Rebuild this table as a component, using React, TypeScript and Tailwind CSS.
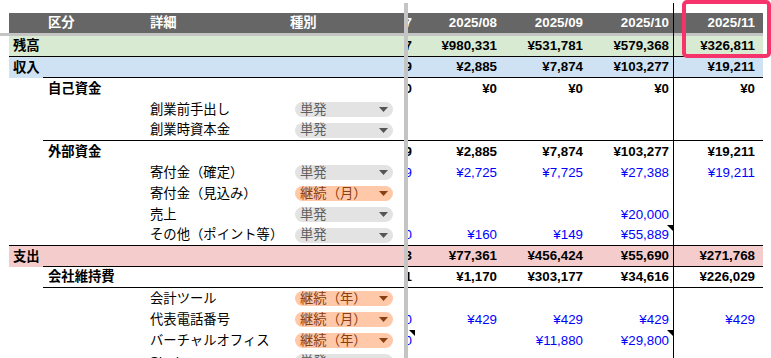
import React from "react";

type Chip = "one" | "month" | "year";
type Row = {
  b?: string;
  c?: string;
  d?: string;
  chip?: Chip;
  vals: string[];
  blue?: boolean;
  bold?: boolean;
  border?: "B" | "C";
  notes?: number[];
  bg?: string;
};

const rows: Row[] = [
  { b: "残高", bg: "bg-[#d9ead3]", bold: true, border: "B", vals: ["7", "¥980,331", "¥531,781", "¥579,368", "¥326,811"] },
  { b: "収入", bg: "bg-[#cfe2f3]", bold: true, border: "C", vals: ["9", "¥2,885", "¥7,874", "¥103,277", "¥19,211"] },
  { c: "自己資金", bold: true, vals: ["0", "¥0", "¥0", "¥0", "¥0"] },
  { d: "創業前手出し", chip: "one", vals: ["", "", "", "", ""] },
  { d: "創業時資本金", chip: "one", border: "C", vals: ["", "", "", "", ""] },
  { c: "外部資金", bold: true, vals: ["9", "¥2,885", "¥7,874", "¥103,277", "¥19,211"] },
  { d: "寄付金（確定）", chip: "one", blue: true, vals: ["9", "¥2,725", "¥7,725", "¥27,388", "¥19,211"] },
  { d: "寄付金（見込み）", chip: "month", vals: ["", "", "", "", ""] },
  { d: "売上", chip: "one", blue: true, vals: ["", "", "", "¥20,000", ""] },
  { d: "その他（ポイント等）", chip: "one", blue: true, border: "B", notes: [3], vals: ["0", "¥160", "¥149", "¥55,889", ""] },
  { b: "支出", bg: "bg-[#f4cccc]", bold: true, border: "C", vals: ["3", "¥77,361", "¥456,424", "¥55,690", "¥271,768"] },
  { c: "会社維持費", bold: true, border: "C", vals: ["1", "¥1,170", "¥303,177", "¥34,616", "¥226,029"] },
  { d: "会計ツール", chip: "year", vals: ["", "", "", "", ""] },
  { d: "代表電話番号", chip: "month", blue: true, vals: ["0", "¥429", "¥429", "¥429", "¥429"] },
  { d: "バーチャルオフィス", chip: "year", blue: true, notes: [0, 3], vals: ["0", "", "¥11,880", "¥29,800", ""] },
  { d: "Slack", chip: "one", vals: ["", "", "", "", ""] },
];

const GRID =
  "grid grid-cols-[9px_34px_103px_142px_116px_4px_7px_86px_86px_86px_87px_3px]";

function ChipView({ kind }: { kind: Chip }) {
  const orange = kind !== "one";
  const label = kind === "one" ? "単発" : kind === "month" ? "継続（月）" : "継続（年）";
  return (
    <div
      className={
        "w-[98px] h-[15px] rounded-full flex items-center justify-between pl-[5px] pr-[5px] " +
        (orange ? "bg-[#ffc8a8] text-[#8a3f10]" : "bg-[#e3e3e3] text-[#5f5f5f]")
      }
    >
      <span className="leading-none">{label}</span>
      <svg width="9" height="5" viewBox="0 0 9 5">
        <polygon points="0,0 9,0 4.5,5" fill={orange ? "#8a3f10" : "#555555"} />
      </svg>
    </div>
  );
}

function Note() {
  return (
    <svg className="absolute top-0 right-0" width="6" height="6" viewBox="0 0 6 6">
      <polygon points="0,0 6,0 6,6" fill="#000000" />
    </svg>
  );
}

function DataRow({ r }: { r: Row }) {
  const bg = r.bg ?? "";
  const start = r.border === "B" ? 1 : r.border === "C" ? 2 : 99;
  const bd = (i: number) => (i >= start ? " border-b border-black" : "");
  const valText = r.blue ? "text-[#0000ff]" : "text-black";
  const weight = r.bold ? "font-bold" : "font-normal";
  return (
    <div className={GRID + " h-[21px]"}>
      <div />
      <div className={"flex items-center pl-[4px] font-bold whitespace-nowrap " + bg + bd(1)}>{r.b}</div>
      <div className={"flex items-center pl-[5px] font-bold whitespace-nowrap " + bg + bd(2)}>{r.c}</div>
      <div className={"flex items-center pl-[4px] whitespace-nowrap overflow-visible z-0 " + bg + bd(3)}>{r.d}</div>
      <div className={"flex items-center pl-[7px] relative z-10 " + bg + bd(4)}>
        {r.chip ? <ChipView kind={r.chip} /> : null}
      </div>
      <div className="bg-[#c4c4c4] relative z-20" />
      {r.vals.map((v, i) => (
        <div
          key={i}
          className={
            "relative flex items-center justify-end overflow-hidden whitespace-nowrap " +
            (i === 0 ? "pr-[3px] " : i === 4 ? "pr-[5px] border-l border-l-black " : "pr-[4px] ") +
            valText + " " + weight + " " + bg + bd(6 + i)
          }
        >
          <span>{v}</span>
          {r.notes?.includes(i) ? <Note /> : null}
        </div>
      ))}
      <div className={bg + bd(11)} />
    </div>
  );
}

export default function App() {
  const months = ["7", "2025/08", "2025/09", "2025/10", "2025/11"];
  return (
    <div className="relative w-[771px] h-[358px] overflow-hidden bg-white text-[13.33px] leading-none font-['Liberation_Sans','Noto_Sans_CJK_JP',sans-serif] text-black">
      {/* top white band */}
      <div className={GRID + " h-[13px]"}>
        <div />
        <div />
        <div />
        <div />
        <div />
        <div className="mt-[3px] bg-[#c4c4c4]" />
        <div />
        <div />
        <div />
        <div />
        <div className="mt-[3px] border-l border-black" />
        <div />
      </div>
      {/* header */}
      <div className={GRID + " h-[20px] text-white font-bold"}>
        <div />
        <div className="bg-[#666666]" />
        <div className="bg-[#666666] flex items-center pl-[5px]">区分</div>
        <div className="bg-[#666666] flex items-center pl-[4px]">詳細</div>
        <div className="bg-[#666666] flex items-center pl-[2px]">種別</div>
        <div className="bg-[#c4c4c4]" />
        {months.map((m, i) => (
          <div
            key={m}
            className={
              "bg-[#666666] flex items-center justify-end overflow-hidden whitespace-nowrap " +
              (i === 0 ? "pr-[3px]" : i === 4 ? "pr-[5px] border-l border-black" : "pr-[4px]")
            }
          >
            {m}
          </div>
        ))}
        <div className="bg-[#666666]" />
      </div>
      {/* frozen row divider */}
      <div className={GRID + " h-[3px]"}>
        {Array.from({ length: 12 }).map((_, i) => (
          <div key={i} className={"bg-[#c4c4c4]" + (i === 10 ? " border-l border-black" : "")} />
        ))}
      </div>
      {rows.map((r, i) => (
        <DataRow key={i} r={r} />
      ))}
      {/* highlight annotation */}
      <div className="absolute left-[682px] top-0 w-[89px] h-[58px] border-4 border-[#f7336b] rounded-[5px] pointer-events-none" />
    </div>
  );
}
